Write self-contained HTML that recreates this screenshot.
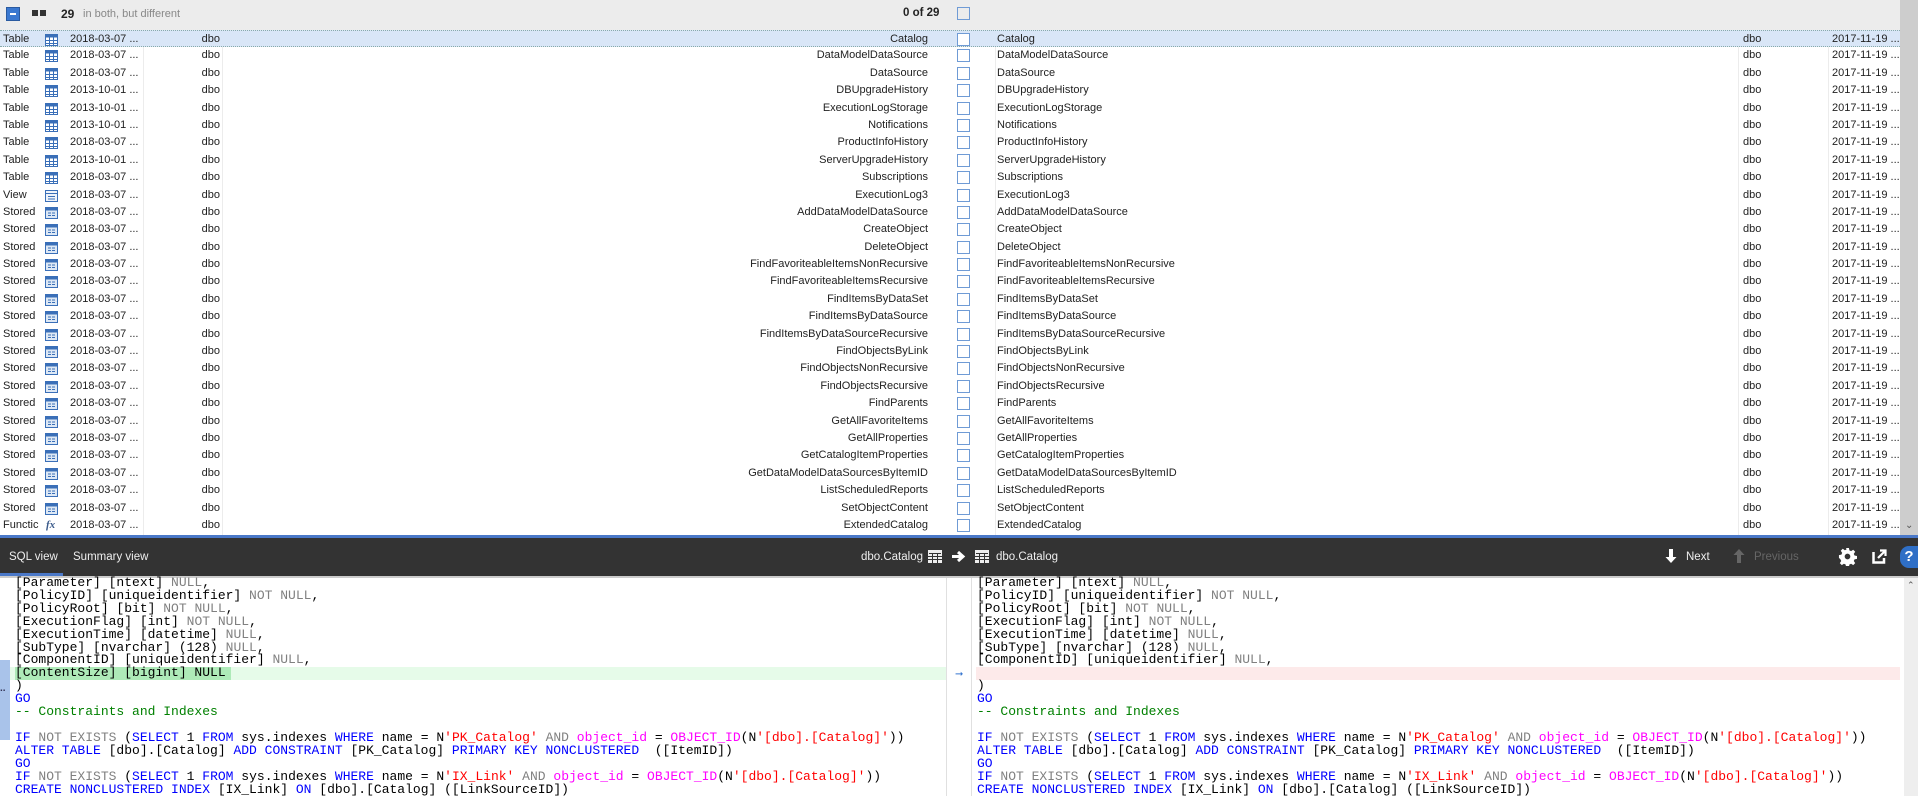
<!DOCTYPE html>
<html><head><meta charset="utf-8"><style>
*{margin:0;padding:0;box-sizing:border-box}
body{width:1918px;height:796px;overflow:hidden;background:#fff;font-family:"Liberation Sans",sans-serif;font-size:11px;color:#222;position:relative}
.top{position:absolute;left:0;top:0;width:1900px;height:30px;background:#ececec}
.sb{position:absolute;left:1900px;top:0;width:18px;height:535px;background:#cdcdcd}
.rows{position:absolute;left:0;top:30px;width:1900px;height:505px;overflow:hidden}
.r{position:relative;height:17.4px;line-height:17.4px;white-space:nowrap}
.r.sel{background:#d9e6f7;border-top:1px dotted #8aa;border-bottom:1px dotted #8aa}
.r span{position:absolute;top:0}
.t{left:3px}.ic{left:45px;top:3px;width:13px;height:12px}
.d{left:70px}.o{left:150px;width:70px;text-align:right}
.n{right:972px;text-align:right}.cb{left:957px;top:2px!important;width:13px;height:13px;border:1px solid #6f9bd5;background:#fff}
.n2{left:997px}.o2{left:1743px}.d2{left:1832px}
.vl{position:absolute;top:30px;width:1px;height:505px;background:#ececec}
.bar{position:absolute;left:0;top:535px;width:1918px;height:41px;background:#333;border-top:3px solid #4a78c8;color:#eee;font-size:11.5px}
.bar span{position:absolute;top:13px}
.code{position:absolute;top:577px;font-family:"Liberation Mono",monospace;font-size:13px;line-height:12.9px;white-space:pre;color:#000}
.k{color:#0000ff}.g{color:#808080}.s{color:#ff0000}.c{color:#008000}.m{color:#ff00ff}
</style></head><body>
<div class="top">
<div style="position:absolute;left:6px;top:7px;width:14px;height:14px;background:#3a78d0;border:1px solid #2a5aa0"><div style="position:absolute;left:3px;top:5px;width:6px;height:2px;background:#fff"></div></div>
<div style="position:absolute;left:32px;top:10px;width:6px;height:6px;background:#333"></div><div style="position:absolute;left:40px;top:10px;width:6px;height:6px;background:#333"></div>
<span style="position:absolute;left:61px;top:7px;font-weight:bold;font-size:12px">29</span>
<span style="position:absolute;left:83px;top:8px;color:#888;font-size:11px">in both, but different</span>
<span style="position:absolute;left:903px;top:7px;font-weight:bold;font-size:11.5px">0 of 29</span>
<div style="position:absolute;left:957px;top:7px;width:13px;height:13px;border:1px solid #6f9bd5"></div>
</div>
<div class="sb"><div style="position:absolute;left:5px;top:520px;color:#555;font-size:10px">&#8964;</div></div>
<div class="vl" style="left:143px"></div><div class="vl" style="left:222px"></div><div class="vl" style="left:995px"></div><div class="vl" style="left:1738px"></div><div class="vl" style="left:1828px"></div>
<div class="rows">
<svg width="0" height="0" style="position:absolute"><defs>
<symbol id="tb" viewBox="0 0 13 12"><rect x="0.5" y="0.5" width="12" height="11" fill="#fff" stroke="#3a6fb8"/><rect x="0.5" y="0.5" width="12" height="3" fill="#3a6fb8"/><path d="M4.5 3v9M8.5 3v9M0 6.5h13M0 9.5h13" stroke="#3a6fb8"/></symbol>
<symbol id="sp" viewBox="0 0 13 12"><rect x="0.5" y="0.5" width="12" height="11" fill="#dde8f5" stroke="#3a6fb8"/><rect x="0.5" y="0.5" width="12" height="3" fill="#3a6fb8"/><path d="M3 6h3M3 8.5h3M7 6h3M7 8.5h3" stroke="#3a6fb8"/></symbol>
<symbol id="vw" viewBox="0 0 13 12"><rect x="0.5" y="0.5" width="12" height="11" fill="#eef3fa" stroke="#3a6fb8"/><path d="M0 3.5h13M3 6.5h7M3 9h7" stroke="#3a6fb8"/></symbol>
</defs></svg>
<div class="r sel"><span class="t">Table</span><svg class="ic" style="position:absolute"><use href="#tb"/></svg><span class="d">2018-03-07 ...</span><span class="o">dbo</span><span class="n">Catalog</span><span class="cb"></span><span class="n2">Catalog</span><span class="o2">dbo</span><span class="d2">2017-11-19 ...</span></div>
<div class="r"><span class="t">Table</span><svg class="ic" style="position:absolute"><use href="#tb"/></svg><span class="d">2018-03-07 ...</span><span class="o">dbo</span><span class="n">DataModelDataSource</span><span class="cb"></span><span class="n2">DataModelDataSource</span><span class="o2">dbo</span><span class="d2">2017-11-19 ...</span></div>
<div class="r"><span class="t">Table</span><svg class="ic" style="position:absolute"><use href="#tb"/></svg><span class="d">2018-03-07 ...</span><span class="o">dbo</span><span class="n">DataSource</span><span class="cb"></span><span class="n2">DataSource</span><span class="o2">dbo</span><span class="d2">2017-11-19 ...</span></div>
<div class="r"><span class="t">Table</span><svg class="ic" style="position:absolute"><use href="#tb"/></svg><span class="d">2013-10-01 ...</span><span class="o">dbo</span><span class="n">DBUpgradeHistory</span><span class="cb"></span><span class="n2">DBUpgradeHistory</span><span class="o2">dbo</span><span class="d2">2017-11-19 ...</span></div>
<div class="r"><span class="t">Table</span><svg class="ic" style="position:absolute"><use href="#tb"/></svg><span class="d">2013-10-01 ...</span><span class="o">dbo</span><span class="n">ExecutionLogStorage</span><span class="cb"></span><span class="n2">ExecutionLogStorage</span><span class="o2">dbo</span><span class="d2">2017-11-19 ...</span></div>
<div class="r"><span class="t">Table</span><svg class="ic" style="position:absolute"><use href="#tb"/></svg><span class="d">2013-10-01 ...</span><span class="o">dbo</span><span class="n">Notifications</span><span class="cb"></span><span class="n2">Notifications</span><span class="o2">dbo</span><span class="d2">2017-11-19 ...</span></div>
<div class="r"><span class="t">Table</span><svg class="ic" style="position:absolute"><use href="#tb"/></svg><span class="d">2018-03-07 ...</span><span class="o">dbo</span><span class="n">ProductInfoHistory</span><span class="cb"></span><span class="n2">ProductInfoHistory</span><span class="o2">dbo</span><span class="d2">2017-11-19 ...</span></div>
<div class="r"><span class="t">Table</span><svg class="ic" style="position:absolute"><use href="#tb"/></svg><span class="d">2013-10-01 ...</span><span class="o">dbo</span><span class="n">ServerUpgradeHistory</span><span class="cb"></span><span class="n2">ServerUpgradeHistory</span><span class="o2">dbo</span><span class="d2">2017-11-19 ...</span></div>
<div class="r"><span class="t">Table</span><svg class="ic" style="position:absolute"><use href="#tb"/></svg><span class="d">2018-03-07 ...</span><span class="o">dbo</span><span class="n">Subscriptions</span><span class="cb"></span><span class="n2">Subscriptions</span><span class="o2">dbo</span><span class="d2">2017-11-19 ...</span></div>
<div class="r"><span class="t">View</span><svg class="ic" style="position:absolute"><use href="#vw"/></svg><span class="d">2018-03-07 ...</span><span class="o">dbo</span><span class="n">ExecutionLog3</span><span class="cb"></span><span class="n2">ExecutionLog3</span><span class="o2">dbo</span><span class="d2">2017-11-19 ...</span></div>
<div class="r"><span class="t">Stored</span><svg class="ic" style="position:absolute"><use href="#sp"/></svg><span class="d">2018-03-07 ...</span><span class="o">dbo</span><span class="n">AddDataModelDataSource</span><span class="cb"></span><span class="n2">AddDataModelDataSource</span><span class="o2">dbo</span><span class="d2">2017-11-19 ...</span></div>
<div class="r"><span class="t">Stored</span><svg class="ic" style="position:absolute"><use href="#sp"/></svg><span class="d">2018-03-07 ...</span><span class="o">dbo</span><span class="n">CreateObject</span><span class="cb"></span><span class="n2">CreateObject</span><span class="o2">dbo</span><span class="d2">2017-11-19 ...</span></div>
<div class="r"><span class="t">Stored</span><svg class="ic" style="position:absolute"><use href="#sp"/></svg><span class="d">2018-03-07 ...</span><span class="o">dbo</span><span class="n">DeleteObject</span><span class="cb"></span><span class="n2">DeleteObject</span><span class="o2">dbo</span><span class="d2">2017-11-19 ...</span></div>
<div class="r"><span class="t">Stored</span><svg class="ic" style="position:absolute"><use href="#sp"/></svg><span class="d">2018-03-07 ...</span><span class="o">dbo</span><span class="n">FindFavoriteableItemsNonRecursive</span><span class="cb"></span><span class="n2">FindFavoriteableItemsNonRecursive</span><span class="o2">dbo</span><span class="d2">2017-11-19 ...</span></div>
<div class="r"><span class="t">Stored</span><svg class="ic" style="position:absolute"><use href="#sp"/></svg><span class="d">2018-03-07 ...</span><span class="o">dbo</span><span class="n">FindFavoriteableItemsRecursive</span><span class="cb"></span><span class="n2">FindFavoriteableItemsRecursive</span><span class="o2">dbo</span><span class="d2">2017-11-19 ...</span></div>
<div class="r"><span class="t">Stored</span><svg class="ic" style="position:absolute"><use href="#sp"/></svg><span class="d">2018-03-07 ...</span><span class="o">dbo</span><span class="n">FindItemsByDataSet</span><span class="cb"></span><span class="n2">FindItemsByDataSet</span><span class="o2">dbo</span><span class="d2">2017-11-19 ...</span></div>
<div class="r"><span class="t">Stored</span><svg class="ic" style="position:absolute"><use href="#sp"/></svg><span class="d">2018-03-07 ...</span><span class="o">dbo</span><span class="n">FindItemsByDataSource</span><span class="cb"></span><span class="n2">FindItemsByDataSource</span><span class="o2">dbo</span><span class="d2">2017-11-19 ...</span></div>
<div class="r"><span class="t">Stored</span><svg class="ic" style="position:absolute"><use href="#sp"/></svg><span class="d">2018-03-07 ...</span><span class="o">dbo</span><span class="n">FindItemsByDataSourceRecursive</span><span class="cb"></span><span class="n2">FindItemsByDataSourceRecursive</span><span class="o2">dbo</span><span class="d2">2017-11-19 ...</span></div>
<div class="r"><span class="t">Stored</span><svg class="ic" style="position:absolute"><use href="#sp"/></svg><span class="d">2018-03-07 ...</span><span class="o">dbo</span><span class="n">FindObjectsByLink</span><span class="cb"></span><span class="n2">FindObjectsByLink</span><span class="o2">dbo</span><span class="d2">2017-11-19 ...</span></div>
<div class="r"><span class="t">Stored</span><svg class="ic" style="position:absolute"><use href="#sp"/></svg><span class="d">2018-03-07 ...</span><span class="o">dbo</span><span class="n">FindObjectsNonRecursive</span><span class="cb"></span><span class="n2">FindObjectsNonRecursive</span><span class="o2">dbo</span><span class="d2">2017-11-19 ...</span></div>
<div class="r"><span class="t">Stored</span><svg class="ic" style="position:absolute"><use href="#sp"/></svg><span class="d">2018-03-07 ...</span><span class="o">dbo</span><span class="n">FindObjectsRecursive</span><span class="cb"></span><span class="n2">FindObjectsRecursive</span><span class="o2">dbo</span><span class="d2">2017-11-19 ...</span></div>
<div class="r"><span class="t">Stored</span><svg class="ic" style="position:absolute"><use href="#sp"/></svg><span class="d">2018-03-07 ...</span><span class="o">dbo</span><span class="n">FindParents</span><span class="cb"></span><span class="n2">FindParents</span><span class="o2">dbo</span><span class="d2">2017-11-19 ...</span></div>
<div class="r"><span class="t">Stored</span><svg class="ic" style="position:absolute"><use href="#sp"/></svg><span class="d">2018-03-07 ...</span><span class="o">dbo</span><span class="n">GetAllFavoriteItems</span><span class="cb"></span><span class="n2">GetAllFavoriteItems</span><span class="o2">dbo</span><span class="d2">2017-11-19 ...</span></div>
<div class="r"><span class="t">Stored</span><svg class="ic" style="position:absolute"><use href="#sp"/></svg><span class="d">2018-03-07 ...</span><span class="o">dbo</span><span class="n">GetAllProperties</span><span class="cb"></span><span class="n2">GetAllProperties</span><span class="o2">dbo</span><span class="d2">2017-11-19 ...</span></div>
<div class="r"><span class="t">Stored</span><svg class="ic" style="position:absolute"><use href="#sp"/></svg><span class="d">2018-03-07 ...</span><span class="o">dbo</span><span class="n">GetCatalogItemProperties</span><span class="cb"></span><span class="n2">GetCatalogItemProperties</span><span class="o2">dbo</span><span class="d2">2017-11-19 ...</span></div>
<div class="r"><span class="t">Stored</span><svg class="ic" style="position:absolute"><use href="#sp"/></svg><span class="d">2018-03-07 ...</span><span class="o">dbo</span><span class="n">GetDataModelDataSourcesByItemID</span><span class="cb"></span><span class="n2">GetDataModelDataSourcesByItemID</span><span class="o2">dbo</span><span class="d2">2017-11-19 ...</span></div>
<div class="r"><span class="t">Stored</span><svg class="ic" style="position:absolute"><use href="#sp"/></svg><span class="d">2018-03-07 ...</span><span class="o">dbo</span><span class="n">ListScheduledReports</span><span class="cb"></span><span class="n2">ListScheduledReports</span><span class="o2">dbo</span><span class="d2">2017-11-19 ...</span></div>
<div class="r"><span class="t">Stored</span><svg class="ic" style="position:absolute"><use href="#sp"/></svg><span class="d">2018-03-07 ...</span><span class="o">dbo</span><span class="n">SetObjectContent</span><span class="cb"></span><span class="n2">SetObjectContent</span><span class="o2">dbo</span><span class="d2">2017-11-19 ...</span></div>
<div class="r"><span class="t">Functic</span><span style="left:46px;font-family:'Liberation Serif',serif;font-style:italic;font-weight:bold;color:#3a5a8a">fx</span><span class="d">2018-03-07 ...</span><span class="o">dbo</span><span class="n">ExtendedCatalog</span><span class="cb"></span><span class="n2">ExtendedCatalog</span><span class="o2">dbo</span><span class="d2">2017-11-19 ...</span></div>
</div>
<div class="bar">
<span style="left:9px">SQL view</span>
<div style="position:absolute;left:0;top:35px;width:63px;height:3px;background:#4a78c8"></div>
<span style="left:73px">Summary view</span>
<span style="right:995px">dbo.Catalog</span>
<svg style="position:absolute;left:928px;top:12px" width="14" height="13"><rect x="0.5" y="0.5" width="13" height="12" fill="#eee" stroke="#eee"/><path d="M4.5 3v10M9.5 3v10M0 6.5h14M0 9.5h14M1 3.5h12" stroke="#333"/></svg>
<svg style="position:absolute;left:951px;top:12px" width="16" height="13"><path d="M1 6.5h9M7 2l5 4.5-5 4.5" stroke="#fff" stroke-width="3" fill="none"/></svg>
<svg style="position:absolute;left:975px;top:12px" width="14" height="13"><rect x="0.5" y="0.5" width="13" height="12" fill="#eee" stroke="#eee"/><path d="M4.5 3v10M9.5 3v10M0 6.5h14M0 9.5h14M1 3.5h12" stroke="#333"/></svg>
<span style="left:996px">dbo.Catalog</span>
<svg style="position:absolute;left:1665px;top:10px" width="12" height="16"><path d="M6 1v10" stroke="#fff" stroke-width="4"/><path d="M0.5 9l5.5 6 5.5-6z" fill="#fff"/></svg>
<span style="left:1686px">Next</span>
<svg style="position:absolute;left:1733px;top:10px" width="12" height="16"><path d="M6 15V5" stroke="#666" stroke-width="4"/><path d="M0.5 7l5.5-6 5.5 6z" fill="#666"/></svg>
<span style="left:1754px;color:#666">Previous</span>
<svg style="position:absolute;left:1838px;top:9px" width="19" height="19" viewBox="0 0 20 20"><path fill="#fff" d="M8.5 1h3l.5 2.6 1.8.8 2.2-1.5 2.1 2.1-1.5 2.2.8 1.8 2.6.5v3l-2.6.5-.8 1.8 1.5 2.2-2.1 2.1-2.2-1.5-1.8.8-.5 2.6h-3l-.5-2.6-1.8-.8-2.2 1.5-2.1-2.1 1.5-2.2-.8-1.8L1 11.5v-3l2.6-.5.8-1.8-1.5-2.2 2.1-2.1 2.2 1.5 1.8-.8z"/><circle cx="10" cy="10" r="3" fill="#333"/></svg>
<svg style="position:absolute;left:1872px;top:11px" width="15" height="15"><path d="M1.5 3v10.5H12V9" stroke="#fff" stroke-width="2.5" fill="none"/><path d="M6 9l7-7M8 1.5h5.5V7" stroke="#fff" stroke-width="2.2" fill="none"/></svg>
<div style="position:absolute;left:1900px;top:8px;width:18px;height:22px;border-radius:9px 0 0 9px;background:#2f6fc6;color:#fff;font-weight:bold;font-size:15px;text-align:center;line-height:22px">?</div>
</div>
<div style="position:absolute;left:0;top:576px;width:1918px;height:2px;background:#ccc"></div>
<div style="position:absolute;left:0;top:660px;width:10px;height:80px;background:#a9c3ea"></div>
<div style="position:absolute;left:0;top:683px;color:#335;font-size:10px;font-weight:bold">..</div>
<div style="position:absolute;left:10px;top:667px;width:936px;height:13px;background:#e6fbe9"></div>
<div style="position:absolute;left:15px;top:667px;width:216px;height:13px;background:#aeeab8"></div>
<div style="position:absolute;left:946px;top:578px;width:1px;height:218px;background:#e0e0e0"></div>
<div style="position:absolute;left:971px;top:578px;width:1px;height:218px;background:#e0e0e0"></div>
<div style="position:absolute;left:955px;top:669px;color:#3a78d0;font-size:10px">&#10142;</div>
<div style="position:absolute;left:976px;top:667px;width:924px;height:13px;background:#fdeaea"></div>
<div style="position:absolute;left:1904px;top:578px;width:14px;height:218px;background:#eee"><div style="position:absolute;left:3px;top:2px;color:#555;font-size:9px">&#8963;</div></div>
<div class="code" style="left:15px">[Parameter] [ntext] <span class="g">NULL</span>,
[PolicyID] [uniqueidentifier] <span class="g">NOT NULL</span>,
[PolicyRoot] [bit] <span class="g">NOT NULL</span>,
[ExecutionFlag] [int] <span class="g">NOT NULL</span>,
[ExecutionTime] [datetime] <span class="g">NULL</span>,
[SubType] [nvarchar] (128) <span class="g">NULL</span>,
[ComponentID] [uniqueidentifier] <span class="g">NULL</span>,
[ContentSize] [bigint] NULL
)
<span class="k">GO</span>
<span class="c">-- Constraints and Indexes</span>

<span class="k">IF</span> <span class="g">NOT EXISTS</span> (<span class="k">SELECT</span> 1 <span class="k">FROM</span> sys.indexes <span class="k">WHERE</span> name = N<span class="s">'PK_Catalog'</span> <span class="g">AND</span> <span class="m">object_id</span> = <span class="m">OBJECT_ID</span>(N<span class="s">'[dbo].[Catalog]'</span>))
<span class="k">ALTER TABLE</span> [dbo].[Catalog] <span class="k">ADD CONSTRAINT</span> [PK_Catalog] <span class="k">PRIMARY KEY NONCLUSTERED</span>  ([ItemID])
<span class="k">GO</span>
<span class="k">IF</span> <span class="g">NOT EXISTS</span> (<span class="k">SELECT</span> 1 <span class="k">FROM</span> sys.indexes <span class="k">WHERE</span> name = N<span class="s">'IX_Link'</span> <span class="g">AND</span> <span class="m">object_id</span> = <span class="m">OBJECT_ID</span>(N<span class="s">'[dbo].[Catalog]'</span>))
<span class="k">CREATE NONCLUSTERED INDEX</span> [IX_Link] <span class="k">ON</span> [dbo].[Catalog] ([LinkSourceID])</div>
<div class="code" style="left:977px">[Parameter] [ntext] <span class="g">NULL</span>,
[PolicyID] [uniqueidentifier] <span class="g">NOT NULL</span>,
[PolicyRoot] [bit] <span class="g">NOT NULL</span>,
[ExecutionFlag] [int] <span class="g">NOT NULL</span>,
[ExecutionTime] [datetime] <span class="g">NULL</span>,
[SubType] [nvarchar] (128) <span class="g">NULL</span>,
[ComponentID] [uniqueidentifier] <span class="g">NULL</span>,

)
<span class="k">GO</span>
<span class="c">-- Constraints and Indexes</span>

<span class="k">IF</span> <span class="g">NOT EXISTS</span> (<span class="k">SELECT</span> 1 <span class="k">FROM</span> sys.indexes <span class="k">WHERE</span> name = N<span class="s">'PK_Catalog'</span> <span class="g">AND</span> <span class="m">object_id</span> = <span class="m">OBJECT_ID</span>(N<span class="s">'[dbo].[Catalog]'</span>))
<span class="k">ALTER TABLE</span> [dbo].[Catalog] <span class="k">ADD CONSTRAINT</span> [PK_Catalog] <span class="k">PRIMARY KEY NONCLUSTERED</span>  ([ItemID])
<span class="k">GO</span>
<span class="k">IF</span> <span class="g">NOT EXISTS</span> (<span class="k">SELECT</span> 1 <span class="k">FROM</span> sys.indexes <span class="k">WHERE</span> name = N<span class="s">'IX_Link'</span> <span class="g">AND</span> <span class="m">object_id</span> = <span class="m">OBJECT_ID</span>(N<span class="s">'[dbo].[Catalog]'</span>))
<span class="k">CREATE NONCLUSTERED INDEX</span> [IX_Link] <span class="k">ON</span> [dbo].[Catalog] ([LinkSourceID])</div>
</body></html>
